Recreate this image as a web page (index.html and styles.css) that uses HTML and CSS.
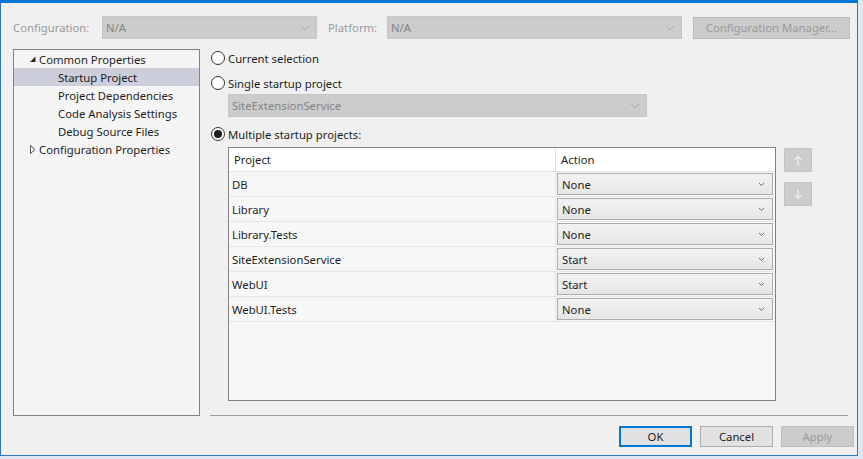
FILE: index.html
```html
<!DOCTYPE html>
<html>
<head>
    <link rel="stylesheet" href="styles.css">
</head>
<body>
    <div class="window">
        <div class="toolbar">
            <span class="tool-label">Configuration:</span>
            <div class="combo combo-config">
                <span>N/A</span>
                <svg class="chev" width="10" height="6" viewBox="0 0 10 6"><path d="M1 1 L5 5 L9 1" fill="none" stroke="#a8a8a8" stroke-width="1"/></svg>
            </div>
            <span class="tool-label platform-label">Platform:</span>
            <div class="combo combo-platform">
                <span>N/A</span>
                <svg class="chev" width="10" height="6" viewBox="0 0 10 6"><path d="M1 1 L5 5 L9 1" fill="none" stroke="#a8a8a8" stroke-width="1"/></svg>
            </div>
            <div class="btn btn-disabled config-btn">Configuration Manager...</div>
        </div>

        <div class="main">
            <div class="tree">
                <div class="tree-item">
                    <svg class="twist" width="7" height="7" viewBox="0 0 7 7"><path d="M6 0.5 L6 6 L0.5 6 Z" fill="#262626"/></svg>
                    Common Properties
                </div>
                <div class="tree-item child selected">Startup Project</div>
                <div class="tree-item child">Project Dependencies</div>
                <div class="tree-item child">Code Analysis Settings</div>
                <div class="tree-item child">Debug Source Files</div>
                <div class="tree-item">
                    <svg class="twist" width="7" height="9" viewBox="0 0 7 9"><path d="M1 0.5 L5.5 4.5 L1 8.5 Z" fill="none" stroke="#555" stroke-width="1"/></svg>
                    Configuration Properties
                </div>
            </div>

            <div class="pane">
                <label class="radio-row">
                    <span class="radio"></span>
                    Current selection
                </label>
                <label class="radio-row second">
                    <span class="radio"></span>
                    Single startup project
                </label>
                <div class="combo combo-single">
                    <span>SiteExtensionService</span>
                    <svg class="chev" width="10" height="6" viewBox="0 0 10 6"><path d="M1 1 L5 5 L9 1" fill="none" stroke="#a8a8a8" stroke-width="1"/></svg>
                </div>
                <label class="radio-row third">
                    <span class="radio checked"></span>
                    Multiple startup projects:
                </label>

                <div class="grid-area">
                    <div class="grid">
                        <div class="grid-head">
                            <div class="col-project">Project</div>
                            <div class="col-action">Action</div>
                        </div>
                        <div id="rows"></div>
                    </div>
                    <div class="move-buttons">
                        <div class="move-btn">
                            <svg width="10" height="11" viewBox="0 0 10 11"><path d="M5 10.5 V1.5 M1.5 5 L5 1.5 L8.5 5" fill="none" stroke="#efefef" stroke-width="1.4"/></svg>
                        </div>
                        <div class="move-btn">
                            <svg width="10" height="11" viewBox="0 0 10 11"><path d="M5 0.5 V9.5 M1.5 6 L5 9.5 L8.5 6" fill="none" stroke="#efefef" stroke-width="1.4"/></svg>
                        </div>
                    </div>
                </div>
            </div>
        </div>

        <div class="footer">
            <div class="btn btn-default">OK</div>
            <div class="btn">Cancel</div>
            <div class="btn btn-disabled">Apply</div>
        </div>
    </div>

    <script>
        const projects = [
            { name: 'DB', action: 'None' },
            { name: 'Library', action: 'None' },
            { name: 'Library.Tests', action: 'None' },
            { name: 'SiteExtensionService', action: 'Start' },
            { name: 'WebUI', action: 'Start' },
            { name: 'WebUI.Tests', action: 'None' }
        ];

        const rows = document.getElementById('rows');
        projects.forEach(p => {
            const row = document.createElement('div');
            row.className = 'grid-row';
            row.innerHTML = `
                <div class="col-project">${p.name}</div>
                <div class="col-action">
                    <div class="action-combo">
                        <span>${p.action}</span>
                        <svg width="7" height="5" viewBox="0 0 7 5"><path d="M1 1 L3.5 3.5 L6 1" fill="none" stroke="#6a6a6a" stroke-width="1"/></svg>
                    </div>
                </div>
            `;
            rows.appendChild(row);
        });
    </script>
</body>
</html>
```

FILE: styles.css
```css
* {
    margin: 0;
    padding: 0;
    box-sizing: border-box;
}

body {
    background: #dfe9f3;
    font-family: 'Noto Sans', 'Open Sans', sans-serif;
    font-size: 11.3px;
    color: #1e1e1e;
}

.window {
    width: 858px;
    height: 456px;
    background: #f0f0f0;
    border: 1px solid #2f78bd;
    border-top: 3px solid #0078d7;
    padding: 13px 3px 0 12px;
    display: flex;
    flex-direction: column;
}

/* top row */
.toolbar {
    display: flex;
    align-items: center;
    height: 23px;
}

.tool-label {
    color: #9a9a9a;
    width: 89px;
    flex: none;
}

.platform-label {
    width: 59px;
    margin-left: 11px;
}

.combo {
    display: flex;
    align-items: center;
    justify-content: space-between;
    height: 23px;
    background: #cccccc;
    border: 1px solid #c6c6c6;
    color: #848484;
    padding: 0 6px 0 3px;
    flex: none;
}

.combo-config {
    width: 215px;
}

.combo-platform {
    width: 295px;
}

.btn {
    display: flex;
    align-items: center;
    justify-content: center;
    height: 21px;
    width: 73px;
    background: #e1e1e1;
    border: 1px solid #adadad;
    color: #1e1e1e;
    flex: none;
    white-space: nowrap;
}

.btn-disabled {
    background: #cccccc;
    border-color: #bfbfbf;
    color: #9a9a9a;
}

.btn-default {
    border: 2px solid #0078d7;
}

.toolbar .config-btn {
    width: 157px;
    height: 22px;
    margin-left: 11px;
}

/* tree + pane */
.main {
    display: flex;
    margin-top: 10px;
    height: 367px;
}

.tree {
    width: 187px;
    background: #f5f5f5;
    border: 1px solid #828282;
}

.tree-item {
    display: flex;
    align-items: center;
    height: 18px;
    padding-left: 13px;
    white-space: nowrap;
}

.tree-item .twist {
    width: 12px;
    flex: none;
}

.tree-item.child {
    padding-left: 44px;
}

.tree-item.selected {
    background: #cccedb;
}

.pane {
    width: 638px;
    margin-left: 10px;
    border-bottom: 1px solid #a0a0a0;
    display: flex;
    flex-direction: column;
}

.radio-row {
    display: flex;
    align-items: center;
    height: 18px;
    gap: 3px;
}

.radio-row.second {
    margin-top: 7px;
}

.radio-row.third {
    margin-top: 8px;
}

.radio {
    width: 14px;
    height: 14px;
    border: 1px solid #333333;
    border-radius: 50%;
    background: #ffffff;
    margin-left: 1px;
    display: flex;
    align-items: center;
    justify-content: center;
}

.radio.checked::after {
    content: '';
    width: 8px;
    height: 8px;
    border-radius: 50%;
    background: #1e1e1e;
}

.combo-single {
    width: 419px;
    margin: 2px 0 0 18px;
}

/* project grid */
.grid-area {
    display: flex;
    margin: 4px 0 0 18px;
}

.grid {
    width: 548px;
    height: 254px;
    border: 1px solid #828282;
    background: #f7f7f7;
}

.grid-head {
    display: flex;
    height: 24px;
    background: #ffffff;
    border-bottom: 1px solid #e3e3e3;
}

.grid-head > div {
    display: flex;
    align-items: center;
    padding-left: 5px;
}

.grid-head .col-project {
    border-right: 1px solid #e3e3e3;
}

.col-project {
    width: 327px;
}

.col-action {
    flex: 1;
}

.grid-row {
    display: flex;
    height: 25px;
    border-bottom: 1px solid #e6e6e6;
}

.grid-row .col-project {
    display: flex;
    align-items: center;
    padding-left: 3px;
    border-right: 1px solid #e6e6e6;
}

.grid-row .col-action {
    padding: 1px 2px 1px 1px;
}

.action-combo {
    display: flex;
    align-items: center;
    justify-content: space-between;
    height: 22px;
    background: linear-gradient(#f2f2f2, #e6e6e6);
    border: 1px solid #acacac;
    padding: 0 7px 0 4px;
}

.move-buttons {
    display: flex;
    flex-direction: column;
    gap: 10px;
    margin: 1px 0 0 8px;
}

.move-btn {
    width: 28px;
    height: 24px;
    background: #cccccc;
    border: 1px solid #c4c4c4;
    display: flex;
    align-items: center;
    justify-content: center;
}

/* bottom buttons */
.footer {
    display: flex;
    justify-content: flex-end;
    gap: 8px;
    margin-top: 10px;
}
```
